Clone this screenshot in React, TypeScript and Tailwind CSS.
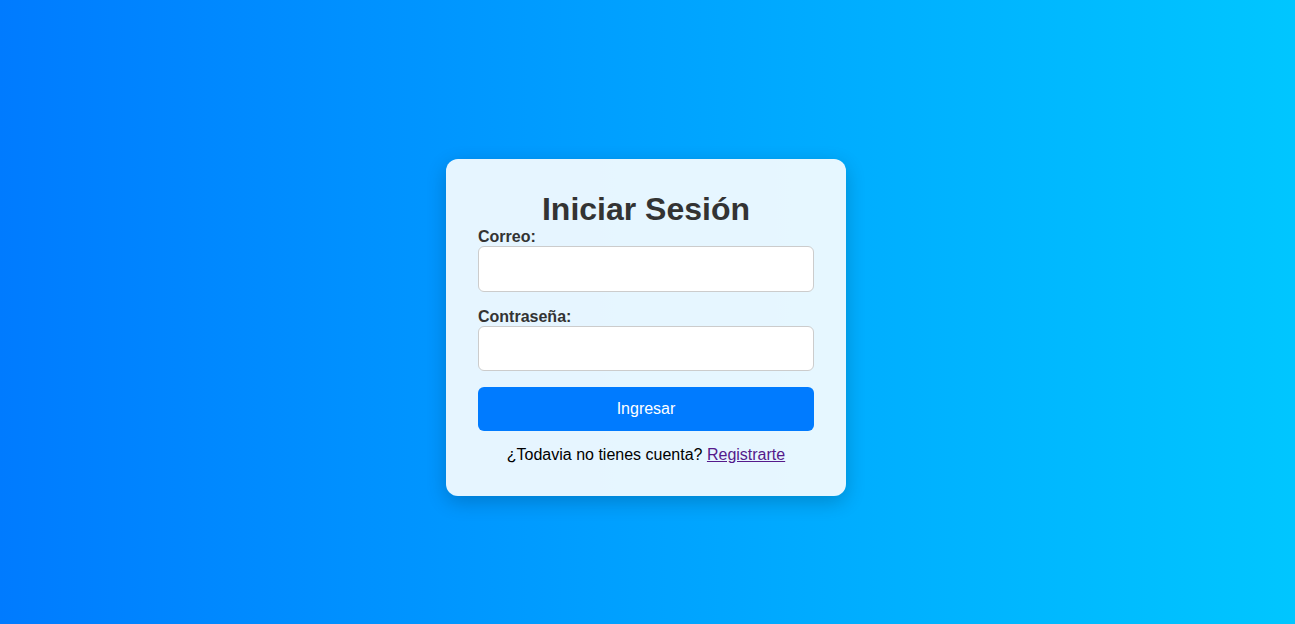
import React from "react";

const App: React.FC = () => {
  return (
    <div className="flex h-[624px] w-full items-center justify-center overflow-hidden bg-gradient-to-r from-[#007bff] to-[#00c6ff] pt-[31px] pr-[3px] font-['Liberation_Sans',Arial,sans-serif]">
      <form
        className="flex w-[400px] flex-col rounded-xl bg-white/90 p-8 shadow-[0_6px_20px_rgba(0,0,0,0.2)]"
        onSubmit={(e) => e.preventDefault()}
      >
        <h2 className="text-center text-[32px] leading-[37px] font-bold text-[#333]">Iniciar Sesión</h2>
        <label className="text-base leading-[18px] font-bold text-[#333]">Correo:</label>
        <input
          type="email"
          className="mb-4 h-[46px] w-full rounded-md border border-[#ccc] bg-white px-3 outline-none"
        />
        <label className="text-base leading-[18px] font-bold text-[#333]">Contraseña:</label>
        <input
          type="password"
          className="mb-4 h-[45px] w-full rounded-md border border-[#ccc] bg-white px-3 outline-none"
        />
        <button
          type="submit"
          className="h-[44px] w-full rounded-md bg-[#007bff] text-base text-white"
        >
          Ingresar
        </button>
        <p className="mt-[15px] text-center text-base leading-[18px] text-black">
          ¿Todavia no tienes cuenta?{" "}
          <a href="#" className="text-[#551a8b] underline">
            Registrarte
          </a>
        </p>
      </form>
    </div>
  );
};

export default App;
